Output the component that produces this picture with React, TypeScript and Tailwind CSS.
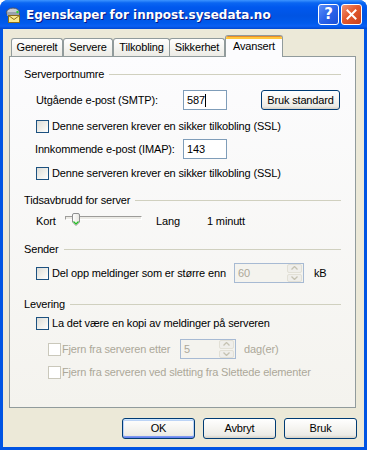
import React from "react";

const font = { fontFamily: '"Liberation Sans", Arial, sans-serif' };

function Check({ disabled = false }: { disabled?: boolean }) {
  return disabled ? (
    <div className="w-[13px] h-[13px] shrink-0 border border-[#CAC8BB] bg-white" />
  ) : (
    <div className="w-[13px] h-[13px] shrink-0 border border-[#1C5180] bg-[linear-gradient(135deg,#DCDCD7_0%,#F2F1EC_60%,#FFFFFF_100%)]" />
  );
}

function Header({ text }: { text: string }) {
  return (
    <div className="flex items-center h-[14px] gap-[5px]">
      <span className="leading-[14px] whitespace-nowrap">{text}</span>
      <div className="flex-1 h-px bg-[#D0D0BF]" />
    </div>
  );
}

function Spinner({ value, w }: { value: string; w: string }) {
  return (
    <div className={`${w} h-[20px] border border-[#A7BAD3] bg-[#F4F3EE] flex items-center justify-between pl-[3px] pr-[1px]`}>
      <span className="text-[#ACA899] leading-[13px]">{value}</span>
      <div className="w-[15px] h-[18px] flex flex-col gap-px">
        <div className="flex-1 rounded-[2px] bg-[#EFEEEA] border border-[#E2E0D6] flex items-center justify-center">
          <svg width="7" height="4" viewBox="0 0 7 4">
            <path d="M0.5 3.5 L3.5 0.5 L6.5 3.5" stroke="#C5C2B2" strokeWidth="1.3" fill="none" />
          </svg>
        </div>
        <div className="flex-1 rounded-[2px] bg-[#EFEEEA] border border-[#E2E0D6] flex items-center justify-center">
          <svg width="7" height="4" viewBox="0 0 7 4">
            <path d="M0.5 0.5 L3.5 3.5 L6.5 0.5" stroke="#C5C2B2" strokeWidth="1.3" fill="none" />
          </svg>
        </div>
      </div>
    </div>
  );
}

function XPButton({ label, def = false, w = "w-[73px]", h = "h-[21px]" }: { label: string; def?: boolean; w?: string; h?: string }) {
  return (
    <div
      className={`${w} ${h} rounded-[3px] border border-[#003C74] flex items-center justify-center bg-[linear-gradient(to_bottom,#FFFFFF_0%,#F5F4F0_50%,#ECEBE6_85%,#D6D0C5_100%)] ${
        def
          ? "shadow-[inset_0_1px_0_#CEE7FF,inset_0_-1px_0_#6982EE,inset_1px_0_0_#B9D1FA,inset_-1px_0_0_#B9D1FA,inset_0_2px_0_#BCD4F6,inset_0_-2px_0_#7D99F1]"
          : ""
      }`}
    >
      <span className="leading-[13px]">{label}</span>
    </div>
  );
}

function Tab({ label, w }: { label: string; w: string }) {
  return (
    <div
      className={`${w} h-[18px] border border-b-0 border-[#919B9C] rounded-t-[3px] bg-[linear-gradient(to_bottom,#FFFFFF_0%,#F3F3EF_60%,#ECEBE6_100%)] flex items-center justify-center -mr-px`}
    >
      <span className="leading-[13px]">{label}</span>
    </div>
  );
}

export default function App() {
  return (
    <div
      className="w-[367px] h-[450px] flex flex-col rounded-t-[8px] overflow-hidden bg-[#0054E3] text-[11px] text-black"
      style={font}
    >
      {/* title bar */}
      <div className="h-[29px] shrink-0 flex items-center pl-[5px] pr-[5px] bg-[linear-gradient(to_bottom,#3D95FF_0%,#0A66F2_10%,#0058EE_25%,#0054E3_55%,#005AEC_80%,#0A60F4_90%,#0047D0_100%)]">
        <svg width="17" height="16" viewBox="0 0 17 16" className="shrink-0">
          <ellipse cx="8" cy="5.5" rx="6.5" ry="4.5" fill="#C9CDD4" stroke="#4A5260" strokeWidth="1" />
          <rect x="2" y="5" width="12" height="4" fill="#9AA1AD" />
          <circle cx="12.5" cy="5" r="1.2" fill="#2ED82E" />
          <rect x="3.5" y="8.5" width="11" height="7" fill="#FBE98C" stroke="#8A6E1A" strokeWidth="1" />
          <path d="M3.5 8.5 L9 12.5 L14.5 8.5" stroke="#8A6E1A" strokeWidth="1" fill="none" />
        </svg>
        <span
          className="ml-[4px] text-white font-bold leading-[16px] whitespace-nowrap [text-shadow:1px_1px_0_#0A1883]"
          style={{ fontFamily: '"DejaVu Sans", "Liberation Sans", sans-serif', fontSize: "12px" }}
        >
          Egenskaper for innpost.sysedata.no
        </span>
        <div className="flex-1" />
        <div className="w-[21px] h-[21px] rounded-[3px] border border-white bg-[linear-gradient(135deg,#5B8FF8_0%,#2A63EA_50%,#1A4FD8_100%)] flex items-center justify-center">
          <span className="text-white font-bold text-[15px] leading-[15px]" style={{ fontFamily: '"DejaVu Sans", sans-serif' }}>?</span>
        </div>
        <div className="ml-[2px] w-[21px] h-[21px] rounded-[3px] border border-white bg-[linear-gradient(135deg,#F09478_0%,#E35A2E_45%,#C9401C_100%)] flex items-center justify-center">
          <svg width="11" height="11" viewBox="0 0 11 11">
            <path d="M1.5 1.5 L9.5 9.5 M9.5 1.5 L1.5 9.5" stroke="white" strokeWidth="2" strokeLinecap="square" />
          </svg>
        </div>
      </div>

      {/* body */}
      <div className="flex-1 mx-[3px] mb-[3px] bg-[#ECE9D8] flex flex-col pt-[7px] pl-[6px] pr-[8px] tracking-[-0.15px]">
        {/* tabs */}
        <div className="h-[20px] flex items-end pl-[2px] relative z-10">
          <Tab label="Generelt" w="w-[52px]" />
          <div className="w-[1px]" />
          <Tab label="Servere" w="w-[50px]" />
          <div className="w-[1px]" />
          <Tab label="Tilkobling" w="w-[57px]" />
          <Tab label="Sikkerhet" w="w-[56px]" />
          <div className="w-[58px] h-[22px] -mb-px border border-b-0 border-[#919B9C] rounded-t-[3px] bg-[#FCFCFE] flex flex-col overflow-hidden ml-[1px]">
            <div className="h-[1px] bg-[#E68B2C]" />
            <div className="h-[2px] bg-[#FFC73C]" />
            <div className="flex-1 flex items-start justify-center pt-[1px]">
              <span className="leading-[13px]">Avansert</span>
            </div>
          </div>
        </div>

        {/* panel */}
        <div className="h-[352px] border border-[#919B9C] bg-[linear-gradient(to_bottom,#FCFCFE_0%,#F4F3EE_100%)] flex flex-col px-[14px] pt-[10px]">
          <Header text="Serverportnumre" />

          <div className="mt-[9px] h-[20px] flex items-center pl-[12px]">
            <span className="w-[147px] leading-[13px]">Utgående e-post (SMTP):</span>
            <div className="w-[44px] h-[20px] border border-[#7F9DB9] bg-white flex items-center pl-[3px]">
              <span className="leading-[13px]">587</span>
              <div className="w-px h-[13px] bg-black" />
            </div>
            <div className="flex-1" />
            <XPButton label="Bruk standard" w="w-[79px]" h="h-[20px]" />
            <div className="w-[1px]" />
          </div>

          <div className="mt-[10px] h-[13px] flex items-center pl-[12px] gap-[3px]">
            <Check />
            <span className="leading-[13px]">Denne serveren krever en sikker tilkobling (SSL)</span>
          </div>

          <div className="mt-[6px] h-[20px] flex items-center pl-[11px]">
            <span className="w-[148px] leading-[13px]">Innkommende e-post (IMAP):</span>
            <div className="w-[44px] h-[20px] border border-[#7F9DB9] bg-white flex items-center pl-[3px]">
              <span className="leading-[13px]">143</span>
            </div>
          </div>

          <div className="mt-[8px] h-[13px] flex items-center pl-[12px] gap-[3px]">
            <Check />
            <span className="leading-[13px]">Denne serveren krever en sikker tilkobling (SSL)</span>
          </div>

          <div className="mt-[13px]">
            <Header text="Tidsavbrudd for server" />
          </div>

          <div className="mt-[6px] h-[16px] flex items-center pl-[12px]">
            <span className="w-[29px] leading-[13px]">Kort</span>
            <div className="relative w-[77px] h-[16px]">
              <div className="absolute left-0 right-0 top-[3px] h-[4px] border-t border-l border-[#9D9C99] border-b border-b-white border-r border-r-white bg-[#ECEBE6]" />
              <svg className="absolute left-[6px] top-0" width="10" height="13" viewBox="0 0 10 13">
                <defs>
                  <linearGradient id="tg" x1="0" y1="0" x2="1" y2="0">
                    <stop offset="0" stopColor="#FFFFFF" />
                    <stop offset="1" stopColor="#E6E5DF" />
                  </linearGradient>
                </defs>
                <path d="M1.5 2 Q1.5 0.5 3 0.5 H7 Q8.5 0.5 8.5 2 V9 L5 12.5 L1.5 9 Z" fill="url(#tg)" stroke="#8E8F8F" strokeWidth="1" />
                <path d="M2.5 8.5 L5 11 L7.5 8.5" stroke="#21C121" strokeWidth="1.2" fill="none" />
              </svg>
            </div>
            <span className="ml-[14px] w-[51px] leading-[13px]">Lang</span>
            <span className="leading-[13px]">1 minutt</span>
          </div>

          <div className="mt-[13px]">
            <Header text="Sender" />
          </div>

          <div className="mt-[7px] h-[20px] flex items-center pl-[12px]">
            <div className="flex items-center gap-[3px] w-[198px]">
              <Check />
              <span className="leading-[13px] whitespace-nowrap">Del opp meldinger som er større enn</span>
            </div>
            <Spinner value="60" w="w-[70px]" />
            <span className="ml-[10px] leading-[13px]">kB</span>
          </div>

          <div className="mt-[14px]">
            <Header text="Levering" />
          </div>

          <div className="mt-[6px] h-[13px] flex items-center pl-[12px] gap-[3px]">
            <Check />
            <span className="leading-[13px]">La det være en kopi av meldinger på serveren</span>
          </div>

          <div className="mt-[9px] h-[20px] flex items-center pl-[24px]">
            <div className="flex items-center gap-[1px] w-[132px]">
              <Check disabled />
              <span className="leading-[13px] text-[#ACA899] whitespace-nowrap">Fjern fra serveren etter</span>
            </div>
            <Spinner value="5" w="w-[56px]" />
            <span className="ml-[8px] leading-[13px] text-[#ACA899]">dag(er)</span>
          </div>

          <div className="mt-[7px] h-[13px] flex items-center pl-[24px] gap-[1px]">
            <Check disabled />
            <span className="leading-[13px] text-[#ACA899]">Fjern fra serveren ved sletting fra Slettede elementer</span>
          </div>
        </div>

        {/* buttons */}
        <div className="mt-[10px] flex justify-end gap-[8px] -mr-px">
          <XPButton label="OK" def />
          <XPButton label="Avbryt" />
          <XPButton label="Bruk" />
        </div>
      </div>
    </div>
  );
}
